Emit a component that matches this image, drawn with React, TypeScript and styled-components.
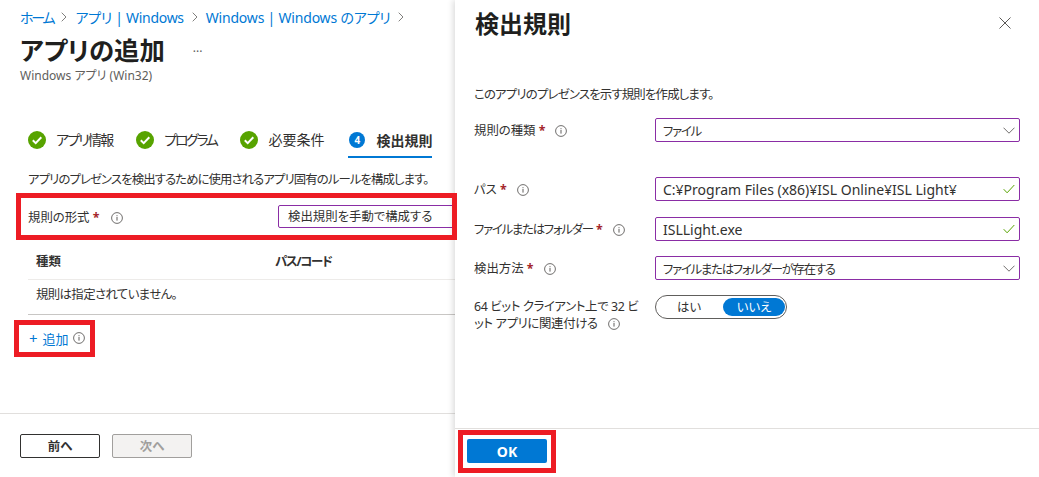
import React from 'react';
import styled, { createGlobalStyle } from 'styled-components';

const GlobalStyle = createGlobalStyle`
  html, body {
    margin: 0;
    padding: 0;
    background: #fff;
  }
  body {
    font-family: "Noto Sans", "Noto Sans CJK JP", sans-serif;
    font-feature-settings: "palt";
    font-size: 12.4px;
    color: #323130;
  }
  * {
    box-sizing: border-box;
  }
`;

const InfoIcon: React.FC = () => (
  <InfoSvg viewBox="0 0 12 12" width="12" height="12">
    <circle cx="6" cy="6" r="5.4" fill="none" stroke="#605e5c" strokeWidth="0.9" />
    <rect x="5.5" y="5" width="1" height="3.6" fill="#605e5c" />
    <rect x="5.5" y="3.2" width="1" height="1" fill="#605e5c" />
  </InfoSvg>
);

const CheckCircle: React.FC = () => (
  <svg viewBox="0 0 18 18" width="18" height="18">
    <circle cx="9" cy="9" r="9" fill="#57a300" />
    <path d="M4.8 9.2l2.9 2.9 5.6-5.8" fill="none" stroke="#fff" strokeWidth="2" />
  </svg>
);

const Chevron: React.FC = () => (
  <ChevronSvg viewBox="0 0 12 7" width="12" height="7">
    <path d="M0.5 0.7L6 6.2l5.5-5.5" fill="none" stroke="#605e5c" strokeWidth="0.9" />
  </ChevronSvg>
);

const ValidMark: React.FC = () => (
  <ChevronSvg viewBox="0 0 12 10" width="12" height="10">
    <path d="M0.7 5.2l3.4 3.6L11.3 1" fill="none" stroke="#57a300" strokeWidth="1" />
  </ChevronSvg>
);

const crumbs = [
  { label: 'ホーム', tight: 2.2 },
  { label: 'アプリ | Windows', tight: 0.3 },
  { label: 'Windows | Windows のアプリ', tight: 0.2 },
];
const steps = [
  { label: 'アプリ情報', tight: 1.8 },
  { label: 'プログラム', tight: 2.4 },
  { label: '必要条件', tight: 0 },
];

const App: React.FC = () => (
  <Page>
    <GlobalStyle />
    <LeftPane>
      <Breadcrumb>
        {crumbs.map((c) => (
          <React.Fragment key={c.label}>
            <Crumb $tight={c.tight}>{c.label}</Crumb>
            <CrumbSep viewBox="0 0 6 10" width="6" height="10">
              <path d="M0.7 0.7L5 5 0.7 9.3" fill="none" stroke="#605e5c" strokeWidth="0.8" />
            </CrumbSep>
          </React.Fragment>
        ))}
      </Breadcrumb>
      <TitleRow>
        <PageTitle>アプリの追加</PageTitle>
        <More>···</More>
      </TitleRow>
      <Subtitle>Windows アプリ (Win32)</Subtitle>

      <Tabs>
        {steps.map((s) => (
          <Tab key={s.label}>
            <CheckCircle />
            <TabLabel $tight={s.tight}>{s.label}</TabLabel>
          </Tab>
        ))}
        <ActiveTab>
          <StepNumber>4</StepNumber>
          <TabLabel $active>検出規則</TabLabel>
        </ActiveTab>
      </Tabs>

      <Content>
        <Description>アプリのプレゼンスを検出するために使用されるアプリ固有のルールを構成します。</Description>
        <FormatRow>
          <FormatLabel>
            規則の形式 <Required>*</Required>
            <InfoIcon />
          </FormatLabel>
          <FormatInput>検出規則を手動で構成する</FormatInput>
        </FormatRow>
        <TableHead>
          <TypeColumn>種類</TypeColumn>
          <Kana>パス/コード</Kana>
        </TableHead>
        <TableEmpty>規則は指定されていません。</TableEmpty>
        <AddRow>
          <Plus>+</Plus>
          <span>追加</span>
          <InfoIcon />
        </AddRow>
      </Content>

      <LeftFooter>
        <OutlineButton>前へ</OutlineButton>
        <DisabledButton>次へ</DisabledButton>
      </LeftFooter>
    </LeftPane>

    <Panel>
      <PanelHeader>
        <PanelTitle>検出規則</PanelTitle>
        <CloseIcon viewBox="0 0 12 12" width="12" height="12">
          <path d="M0.5 0.5l11 11M11.5 0.5l-11 11" fill="none" stroke="#484644" strokeWidth="0.9" />
        </CloseIcon>
      </PanelHeader>
      <PanelBody>
        <PanelIntro>このアプリのプレゼンスを示す規則を作成します。</PanelIntro>
        <FieldRow $top={14}>
          <FieldLabel>
            規則の種類 <Required>*</Required>
            <InfoIcon />
          </FieldLabel>
          <FieldBox>
            <Kana>ファイル</Kana>
            <Chevron />
          </FieldBox>
        </FieldRow>
        <FieldRow $top={35}>
          <FieldLabel>
            パス <Required>*</Required>
            <InfoIcon />
          </FieldLabel>
          <FieldBox $latin>
            <span>C:¥Program Files (x86)¥ISL Online¥ISL Light¥</span>
            <ValidMark />
          </FieldBox>
        </FieldRow>
        <FieldRow $top={16}>
          <FieldLabel>
            <Kana>ファイルまたはフォルダー</Kana> <Required>*</Required>
            <InfoIcon />
          </FieldLabel>
          <FieldBox $latin>
            <span>ISLLight.exe</span>
            <ValidMark />
          </FieldBox>
        </FieldRow>
        <FieldRow $top={15}>
          <FieldLabel>
            検出方法 <Required>*</Required>
            <InfoIcon />
          </FieldLabel>
          <FieldBox>
            <Kana>ファイルまたはフォルダーが存在する</Kana>
            <Chevron />
          </FieldBox>
        </FieldRow>
        <FieldRow $top={15}>
          <WrapLabel>
            64 ビット クライアント上で 32 ビット アプリに関連付ける
            <InfoIcon />
          </WrapLabel>
          <Toggle>
            <ToggleOption>はい</ToggleOption>
            <ToggleOption $on>いいえ</ToggleOption>
          </Toggle>
        </FieldRow>
      </PanelBody>
      <PanelFooter>
        <PrimaryButton>OK</PrimaryButton>
      </PanelFooter>
    </Panel>

    <FormatHighlight />
    <AddHighlight />
    <OkHighlight />
  </Page>
);

const Page = styled.div`
  position: relative;
  display: flex;
  width: 1039px;
  height: 477px;
  overflow: hidden;
  background: #fff;
`;

const LeftPane = styled.div`
  width: 455px;
  flex: none;
  display: flex;
  flex-direction: column;
  overflow: hidden;
`;

const InfoSvg = styled.svg`
  flex: none;
  margin-left: 10px;
  vertical-align: -2px;
`;

const ChevronSvg = styled.svg`
  flex: none;
`;

const Kana = styled.span`
  letter-spacing: -1.25px;
`;

const Breadcrumb = styled.nav`
  display: flex;
  align-items: center;
  height: 18px;
  margin: 8px 0 0 20px;
  font-size: 14px;
  white-space: nowrap;
`;

const Crumb = styled.span<{ $tight: number }>`
  color: #0078d4;
  letter-spacing: ${(p) => -p.$tight}px;
`;

const CrumbSep = styled.svg`
  margin: 0 8px;
`;

const TitleRow = styled.div`
  display: flex;
  align-items: center;
  height: 36px;
  margin: 6px 0 0 20px;
`;

const PageTitle = styled.h1`
  margin: 0;
  font-size: 25.4px;
  font-weight: 700;
  line-height: 36px;
  color: #201f1e;
`;

const More = styled.span`
  margin: 2px 0 0 28px;
  font-size: 12px;
  color: #605e5c;
`;

const Subtitle = styled.div`
  height: 16px;
  margin: 0 0 0 20px;
  font-size: 12px;
  line-height: 16px;
  color: #605e5c;
`;

const Tabs = styled.div`
  display: flex;
  height: 29px;
  margin: 45px 0 0 28px;
`;

const Tab = styled.div`
  display: flex;
  align-items: flex-start;
  gap: 10px;
  margin-right: 24px;
  padding-top: 2px;
`;

const ActiveTab = styled(Tab)`
  gap: 11px;
  margin: 0;
  padding-top: 3px;
  padding-left: 1px;
  border-bottom: 2px solid #0078d4;
  height: 29px;
  width: 84px;
`;

const TabLabel = styled.span<{ $active?: boolean; $tight?: number }>`
  font-size: 14px;
  line-height: 18px;
  white-space: nowrap;
  font-weight: ${(p) => (p.$active ? 700 : 400)};
  letter-spacing: ${(p) => -(p.$tight ?? 0)}px;
  color: #323130;
`;

const StepNumber = styled.span`
  display: flex;
  align-items: center;
  justify-content: center;
  flex: none;
  width: 16px;
  height: 16px;
  border-radius: 50%;
  background: #0078d4;
  color: #fff;
  font-size: 10px;
  font-weight: 700;
`;

const Content = styled.div`
  flex: 1;
  margin-left: 28px;
`;

const Description = styled.p`
  margin: 13px 0 0;
  line-height: 18px;
  letter-spacing: -0.9px;
  white-space: nowrap;
`;

const FormatRow = styled.div`
  display: flex;
  align-items: center;
  height: 23px;
  margin-top: 16px;
`;

const FormatLabel = styled.div`
  width: 250px;
  flex: none;

  ${InfoSvg} {
    margin-left: 12px;
  }
`;

const Required = styled.span`
  color: #a4262c;
  font-weight: 700;
`;

const FormatInput = styled.div`
  width: 220px;
  flex: none;
  height: 23px;
  padding-left: 9px;
  border: 1px solid #8a2da5;
  border-radius: 2px;
  line-height: 21px;
`;

const TableHead = styled.div`
  display: flex;
  height: 52px;
  padding: 25px 0 0 8px;
  border-bottom: 1px solid #edebe9;
  font-weight: 700;
  line-height: 18px;
  white-space: nowrap;
`;

const TypeColumn = styled.span`
  width: 239px;
  flex: none;
`;

const TableEmpty = styled.div`
  height: 35px;
  padding: 6px 0 0 8px;
  border-bottom: 1px solid #c8c6c4;
  line-height: 18px;
  letter-spacing: -0.6px;
`;

const AddRow = styled.div`
  display: flex;
  align-items: center;
  height: 18px;
  margin-top: 14px;
  color: #0078d4;
  font-size: 13px;

  ${InfoSvg} {
    margin-left: 4px;
  }
`;

const Plus = styled.span`
  font-size: 15px;
  margin: 0 5px 0 1px;
`;

const LeftFooter = styled.div`
  flex: none;
  display: flex;
  gap: 12px;
  height: 64px;
  padding: 20px 0 0 20px;
  border-top: 1px solid #e1dfdd;
`;

const OutlineButton = styled.button`
  width: 80px;
  height: 24px;
  padding: 0;
  border: 1px solid #323130;
  border-radius: 2px;
  background: #fff;
  color: #323130;
  font: 700 12.4px "Noto Sans", "Noto Sans CJK JP", sans-serif;
  font-feature-settings: "palt";
`;

const DisabledButton = styled(OutlineButton)`
  border-color: #a19f9d;
  background: #f3f2f1;
  color: #a19f9d;
`;

const Panel = styled.aside`
  flex: 1;
  display: flex;
  flex-direction: column;
  background: #fff;
  box-shadow: -2px 0 6px rgba(0, 0, 0, 0.14);
`;

const PanelHeader = styled.div`
  flex: none;
  display: flex;
  align-items: center;
  justify-content: space-between;
  height: 44px;
  padding: 0 28px 0 20px;
`;

const PanelTitle = styled.h2`
  margin: 0;
  font-size: 24px;
  font-weight: 700;
  color: #201f1e;
`;

const CloseIcon = styled.svg`
  flex: none;
  margin-top: 2px;
`;

const PanelBody = styled.div`
  flex: 1;
  padding: 0 19px;
`;

const PanelIntro = styled.p`
  margin: 42px 0 0;
  line-height: 18px;
  letter-spacing: -0.8px;
`;

const FieldRow = styled.div<{ $top?: number }>`
  display: flex;
  align-items: flex-start;
  margin-top: ${(p) => p.$top ?? 16}px;
`;

const FieldLabel = styled.div`
  width: 181px;
  height: 24px;
  flex: none;
  line-height: 26px;
  white-space: nowrap;
`;

const WrapLabel = styled.div`
  width: 170px;
  margin-right: 11px;
  padding-top: 3px;
  flex: none;
  line-height: 17px;
  letter-spacing: -0.35px;
  word-break: break-all;
`;

const FieldBox = styled.div<{ $latin?: boolean }>`
  flex: none;
  display: flex;
  align-items: center;
  justify-content: space-between;
  width: 365px;
  height: 24px;
  padding: ${(p) => (p.$latin ? 0 : 1)}px 4px 0 7px;
  border: 1px solid #8a2da5;
  border-radius: 2px;
  font-size: ${(p) => (p.$latin ? 14 : 12.4)}px;
  white-space: nowrap;
`;

const Toggle = styled.div`
  display: flex;
  align-items: center;
  width: 132px;
  height: 24px;
  padding: 2px 1px;
  border: 1px solid #605e5c;
  border-radius: 12px;
`;

const ToggleOption = styled.span<{ $on?: boolean }>`
  display: flex;
  align-items: center;
  justify-content: center;
  height: 18px;
  border-radius: 9px;
  width: ${(p) => (p.$on ? 62 : 64)}px;
  margin-left: ${(p) => (p.$on ? 2 : 0)}px;
  background: ${(p) => (p.$on ? '#0078d4' : 'transparent')};
  color: ${(p) => (p.$on ? '#fff' : '#323130')};
`;

const PanelFooter = styled.div`
  flex: none;
  height: 49px;
  padding: 10px 0 0 12px;
  border-top: 1px solid #e1dfdd;
`;

const PrimaryButton = styled.button`
  display: block;
  width: 80px;
  height: 24px;
  padding: 0;
  border: none;
  border-radius: 2px;
  background: #0078d4;
  color: #fff;
  font: 700 14px "Noto Sans", "Noto Sans CJK JP", sans-serif;
`;

const Highlight = styled.div`
  position: absolute;
  z-index: 2;
  border: 5px solid #ed1c24;
  pointer-events: none;
`;

const FormatHighlight = styled(Highlight)`
  left: 16px;
  top: 193px;
  width: 441px;
  height: 47px;
`;

const AddHighlight = styled(Highlight)`
  left: 14px;
  top: 320px;
  width: 81px;
  height: 37px;
`;

const OkHighlight = styled(Highlight)`
  left: 458px;
  top: 430px;
  width: 98px;
  height: 43px;
`;

export default App;
